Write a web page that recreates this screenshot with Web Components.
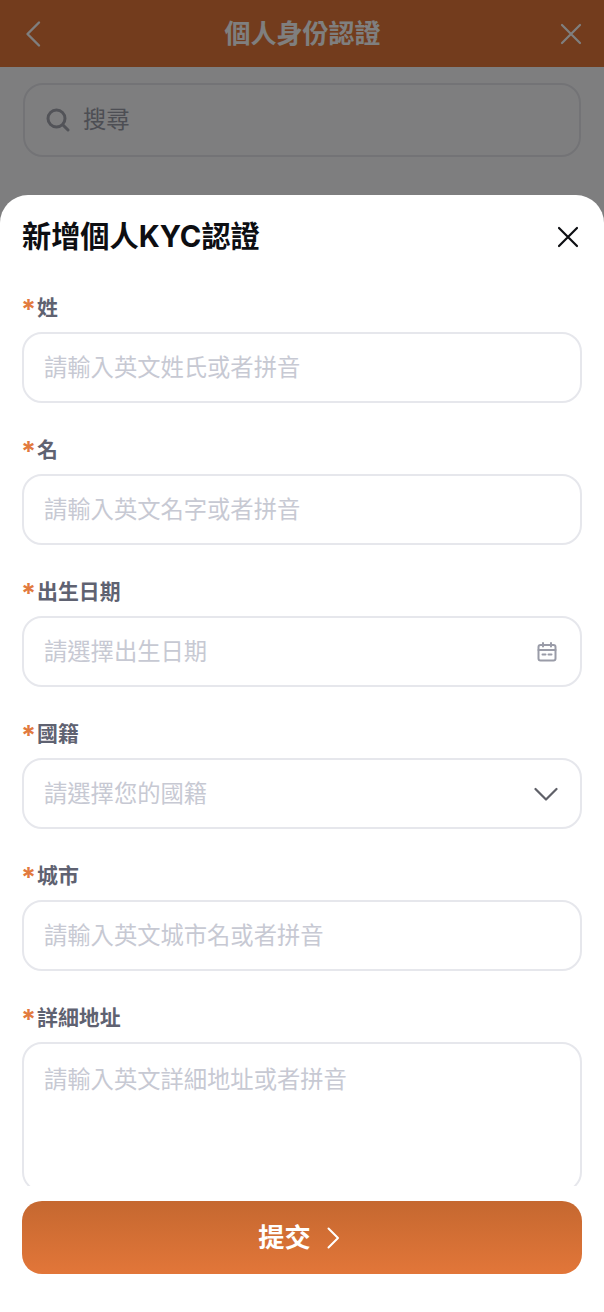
<!DOCTYPE html>
<html lang="zh-Hant"><head><meta charset="utf-8">
<style>
html,body{margin:0;padding:0;height:1312px;overflow:hidden;background:#fdfdff}
body{font-family:Inter,"Noto Sans CJK TC",sans-serif}
</style></head><body>
<kyc-app></kyc-app>
<script>
const FONT='Inter,"Noto Sans CJK TC",sans-serif';
function def(name,html){customElements.define(name,class extends HTMLElement{constructor(){super();this.attachShadow({mode:'open'}).innerHTML=typeof html==='function'?html(this):html}})}
const X=(s,c,sw)=>`<svg width="${s}" height="${s}" viewBox="0 0 24 24" fill="none" stroke="${c}" stroke-width="${sw}" stroke-linecap="round"><path d="M3 3 21 21M21 3 3 21"/></svg>`;

def('app-header',`<style>
:host{display:flex;align-items:center;justify-content:space-between;height:67px;background:#e6793a;padding:0 21px 0 24px;box-sizing:border-box;color:#fff;font:700 26px/34px ${FONT}}
svg{display:block}
span{margin-left:2px}
</style>
<svg width="20" height="28" viewBox="0 0 20 28" fill="none" stroke="#fff" stroke-width="2.4" stroke-linecap="round" stroke-linejoin="round"><path d="M15 2.5 3.5 14 15 25.5"/></svg>
<span>個人身份認證</span>
${X(24,'#fff',2.2)}`);

def('search-box',`<style>
:host{display:flex;margin:16px 23px 0 23px;height:74px;box-sizing:border-box;border:2px solid #e6e7ec;border-radius:20px;align-items:center;padding-left:21px;gap:13px;color:#9a9ca8;font:400 23.3px/30px ${FONT}}
svg{display:block}
</style>
<svg width="24" height="24" viewBox="0 0 24 24" fill="none" stroke="#a4a6b0" stroke-width="3" stroke-linecap="round"><circle cx="10.5" cy="10.5" r="8.5"/><path d="M17 17l5 5"/></svg><span><slot></slot></span>`);

def('form-label',`<style>
:host{display:flex;align-items:center;height:28px;font:600 20.9px/28px ${FONT};color:#5f6271}
i{font:700 27px/28px ${FONT};color:#e27a3e;width:16px;margin-left:-1px;flex:none;font-style:normal;transform:translateY(2px)}
</style><i>*</i><span><slot></slot></span>`);

def('form-field',h=>{
 const big=h.hasAttribute('multi');
 return `<style>
:host{display:block;margin-bottom:33px}
.box{margin-top:10px;height:${big?'150px':'71px'};box-sizing:border-box;border:2px solid #e6e7ec;border-radius:20px;display:flex;align-items:${big?'flex-start':'center'};justify-content:space-between;padding:${big?'21px':'0'} 23px 0 20px;color:#c7c9d3;font:400 23.3px/30px ${FONT}}
::slotted(svg){display:block;flex:none}
</style>
<form-label>${h.getAttribute('label')}</form-label>
<div class="box"><span>${h.getAttribute('placeholder')}</span><slot></slot></div>`});

def('submit-button',`<style>
:host{display:flex;align-items:center;justify-content:center;gap:15px;height:73px;box-sizing:border-box;padding-right:6px;border-radius:20px;background:linear-gradient(180deg,#c56830,#e27639);color:#fff;font:700 26.2px/32px ${FONT}}
svg{display:block}
</style><span><slot></slot></span>
<svg width="14" height="22" viewBox="0 0 14 22" fill="none" stroke="#fff" stroke-width="2" stroke-linecap="round" stroke-linejoin="round"><path d="M2.5 1.5 12 11 2.5 20.5"/></svg>`);

def('kyc-sheet',`<style>
:host{position:absolute;left:0;right:0;top:195px;bottom:0;background:#fff;border-radius:28px 28px 0 0;display:flex;flex-direction:column;overflow:hidden}
.head{display:flex;align-items:center;justify-content:space-between;height:84px;flex:none;padding:0 24px 0 22px;box-sizing:border-box;color:#0d0e12;font:700 29.2px/36px ${FONT}}
.head svg{display:block}
.scroll{height:907px;flex:none;overflow:hidden;padding:15px 22px 0;box-sizing:border-box}
.foot{padding:15px 22px 0}
</style>
<div class="head"><span>新增個人KYC認證</span>${X(24,'#0d0e12',2.2)}</div>
<div class="scroll"><slot></slot></div>
<div class="foot"><slot name="foot"></slot></div>`);

const cal=`<svg width="20" height="20" viewBox="0 0 20 20" fill="none" stroke="#9a9ca8" stroke-width="2" stroke-linecap="round"><rect x="1.5" y="3" width="17" height="15.5" rx="2"/><path d="M1.5 8h17M6 1v3.5M14 1v3.5"/><path d="M5.5 12.5h3M11.5 12.5h3"/></svg>`;
const chev=`<svg style="margin-right:-1px" width="24" height="14" viewBox="0 0 24 14" fill="none" stroke="#5f6068" stroke-width="2.2" stroke-linecap="round" stroke-linejoin="round"><path d="M1.5 2 12 12.5 22.5 2"/></svg>`;

def('kyc-app',`<style>
:host{display:block;position:relative;height:1312px;overflow:hidden;background:#fdfdff}
.scrim{position:absolute;inset:0;background:rgba(0,0,0,.5)}
</style>
<app-header></app-header>
<search-box>搜尋</search-box>
<div class="scrim"></div>
<kyc-sheet>
<form-field label="姓" placeholder="請輸入英文姓氏或者拼音"></form-field>
<form-field label="名" placeholder="請輸入英文名字或者拼音"></form-field>
<form-field label="出生日期" placeholder="請選擇出生日期">${cal}</form-field>
<form-field label="國籍" placeholder="請選擇您的國籍">${chev}</form-field>
<form-field label="城市" placeholder="請輸入英文城市名或者拼音"></form-field>
<form-field label="詳細地址" placeholder="請輸入英文詳細地址或者拼音" multi></form-field>
<submit-button slot="foot">提交</submit-button>
</kyc-sheet>`);
</script></body></html>
